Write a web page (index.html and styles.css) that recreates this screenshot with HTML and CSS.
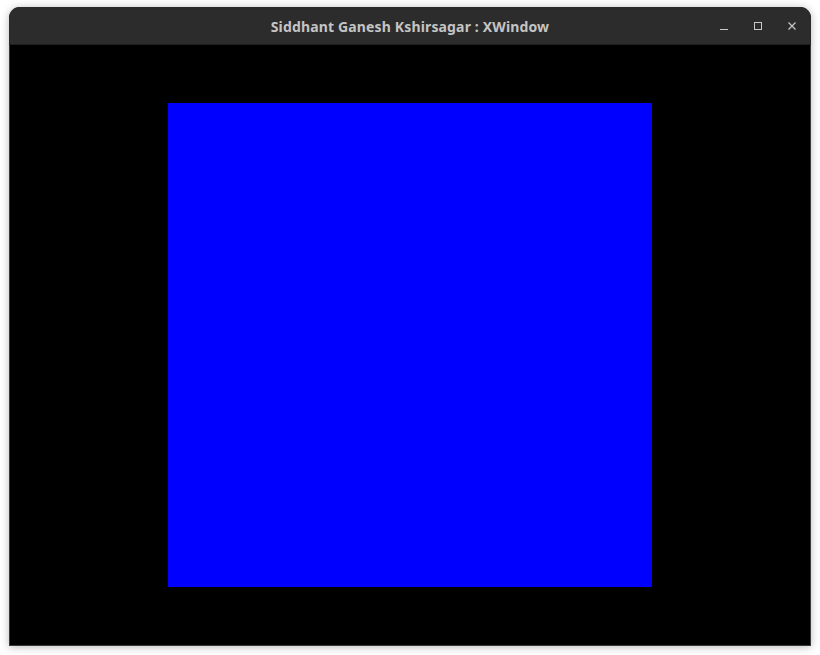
FILE: index.html
```html
<!DOCTYPE html>
<html>
<head>
<meta charset="utf-8">
<link rel="stylesheet" href="styles.css">
</head>
<body>
<div class="window">
  <div class="titlebar">
    <div class="title">Siddhant Ganesh Kshirsagar : XWindow</div>
    <div class="controls">
      <svg class="ctl" width="10" height="10" viewBox="0 0 10 10"><path d="M1 8.5H9" stroke="#c8c8c8" stroke-width="1"/></svg>
      <svg class="ctl" width="10" height="10" viewBox="0 0 10 10"><rect x="1.5" y="1.5" width="7" height="7" fill="none" stroke="#c8c8c8" stroke-width="1"/></svg>
      <svg class="ctl" width="10" height="10" viewBox="0 0 10 10"><path d="M1.5 1.5L8.5 8.5M8.5 1.5L1.5 8.5" stroke="#c8c8c8" stroke-width="1.2"/></svg>
    </div>
  </div>
  <div class="content">
    <div class="square"></div>
  </div>
</div>
</body>
</html>
```
FILE: styles.css
```css
html, body {
  margin: 0;
  padding: 0;
  background: #ffffff;
}
body {
  width: 820px;
  height: 655px;
  overflow: hidden;
  padding-top: 7px;
  padding-left: 9px;
  box-sizing: border-box;
}
.window {
  width: 802px;
  height: 639px;
  border-radius: 11px 11px 0 0;
  background: #2c2c2c;
  box-shadow: 0 1px 8px rgba(0,0,0,0.28);
  display: flex;
  flex-direction: column;
  overflow: hidden;
}
.titlebar {
  height: 37px;
  flex: none;
  background: #2c2c2c;
  position: relative;
  display: flex;
  align-items: center;
  justify-content: center;
  border-bottom: 1px solid #1e1e1e;
}
.title {
  font-family: "Noto Sans", "Open Sans", sans-serif;
  font-weight: 700;
  font-size: 14px;
  color: #c4c4c4;
  letter-spacing: 0.15px;
  margin-top: 2px;
}
.controls {
  position: absolute;
  right: 14px;
  top: 14px;
  display: flex;
  gap: 24px;
}
.ctl {
  display: block;
}
.content {
  flex: 1;
  background: #000000;
  border: 1px solid #3a3a3a;
  border-top: none;
  padding-top: 58px;
  padding-left: 158px;
}
.square {
  width: 484px;
  height: 484px;
  background: #0000ff;
}
```
